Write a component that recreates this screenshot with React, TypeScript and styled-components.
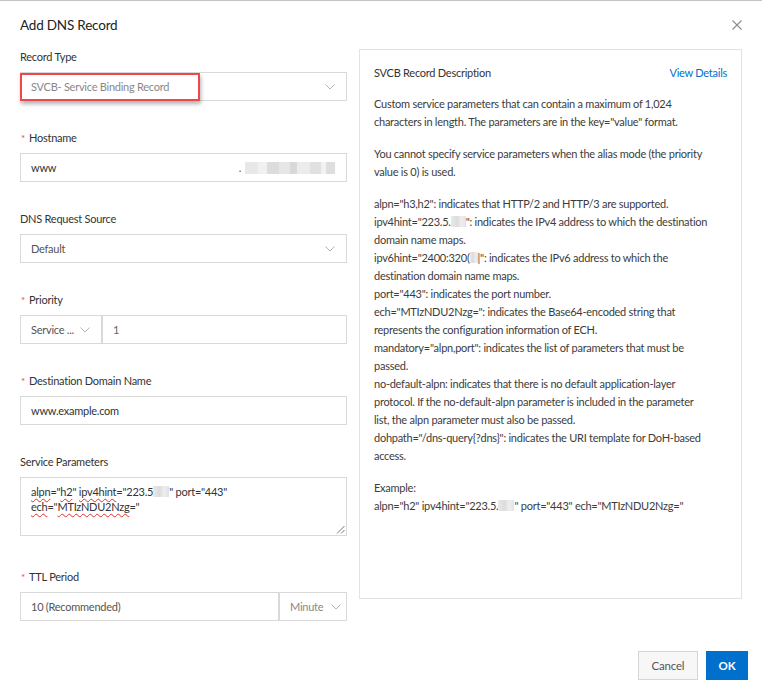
import React from "react";
import styled, { createGlobalStyle } from "styled-components";

const GlobalStyle = createGlobalStyle`
  html, body {
    margin: 0;
    padding: 0;
    background: #fff;
  }
  body {
    font-family: Lato, "Open Sans", sans-serif;
    font-size: 11px;
    letter-spacing: -0.25px;
    color: #333;
  }
`;

const Dialog = styled.div`
  width: 762px;
  height: 688px;
  box-sizing: border-box;
  border-top: 1px solid #c4c4c4;
  background: #fff;
  display: flex;
  flex-direction: column;
  overflow: hidden;
`;

const Header = styled.div`
  flex: none;
  height: 48px;
  padding: 0 19px 0 20px;
  display: flex;
  align-items: center;
  justify-content: space-between;
`;

const Title = styled.h1`
  margin: 0;
  font-size: 13.5px;
  letter-spacing: -0.2px;
  font-weight: 400;
  color: #222;
`;

const CloseButton = styled.button`
  width: 12px;
  height: 12px;
  padding: 0;
  border: none;
  background: none;
  display: flex;
  align-items: center;
  justify-content: center;
  cursor: pointer;
`;

const Body = styled.div`
  flex: none;
  display: flex;
  align-items: flex-start;
  gap: 12px;
  padding: 0 20px;
`;

const FormColumn = styled.div`
  width: 327px;
  display: flex;
  flex-direction: column;
`;

const FormItem = styled.div<{ $gap?: number }>`
  margin-bottom: ${(p) => p.$gap ?? 29}px;
  &:last-child {
    margin-bottom: 0;
  }
`;

const Label = styled.div`
  line-height: 16px;
  margin-bottom: 7px;
  color: #333;
`;

const Star = styled.span`
  color: #e84a45;
  font-size: 10px;
  margin: 0 4px 0 1px;
`;

const Field = styled.div<{ $width?: number; $color?: string; $pr?: number }>`
  position: relative;
  box-sizing: border-box;
  height: 29px;
  width: ${(p) => (p.$width ? `${p.$width}px` : "auto")};
  flex: ${(p) => (p.$width ? "none" : "1")};
  border: 1px solid #d9d9d9;
  background: #fff;
  padding: 0 ${(p) => p.$pr ?? 11}px 0 10px;
  display: flex;
  align-items: center;
  gap: 4px;
  color: ${(p) => p.$color ?? "#333"};
`;

const FieldText = styled.span`
  flex: 1;
  min-width: 0;
  white-space: nowrap;
`;

const Group = styled.div`
  display: flex;
`;

const Highlight = styled.div`
  position: absolute;
  left: -1px;
  top: 0;
  width: 180px;
  height: 28px;
  box-sizing: border-box;
  border: 2px solid #f0474a;
  box-shadow: 1px 3px 4px rgba(0, 0, 0, 0.3);
  pointer-events: none;
`;

const Blur = styled.span<{ $w: number }>`
  display: inline-block;
  width: ${(p) => p.$w}px;
  height: 11px;
  vertical-align: -1px;
  background: linear-gradient(90deg, #e9e9e9, #dcdcdc 40%, #eeeeee 70%, #e2e2e2);
`;

const HostBlur = styled.span`
  display: inline-block;
  width: 90px;
  height: 12px;
  background: linear-gradient(
    90deg,
    #e8e8e8 0 14%,
    #f0f0f0 14% 24%,
    #dcdcdc 24% 38%,
    #e6e6e6 38% 50%,
    #d9d9d9 50% 58%,
    #ececec 58% 72%,
    #e1e1e1 72% 84%,
    #f2f2f2 84% 90%,
    #dedede 90% 100%
  );
`;

const TextArea = styled.div`
  position: relative;
  box-sizing: border-box;
  height: 59px;
  border: 1px solid #d9d9d9;
  padding: 6px 10px;
  line-height: 15px;
  color: #333;
`;

const Squiggle = styled.span`
  text-decoration: underline wavy #e0302b;
  text-decoration-thickness: 1px;
  text-underline-offset: 2px;
`;

const ResizeGrip = styled.svg`
  position: absolute;
  right: 1px;
  bottom: 1px;
`;

const Panel = styled.section`
  width: 383px;
  height: 550px;
  box-sizing: border-box;
  border: 1px solid #e3e3e3;
  padding: 14px;
  color: #3c3c3c;
  line-height: 18px;
`;

const PanelHead = styled.div`
  display: flex;
  justify-content: space-between;
  margin-bottom: 13px;
`;

const PanelTitle = styled.span`
  color: #333;
`;

const Link = styled.a`
  color: #0070cc;
  text-decoration: none;
  cursor: pointer;
`;

const Para = styled.p`
  margin: 0 0 14px;
  white-space: nowrap;
`;

const Footer = styled.div`
  flex: none;
  margin-top: 30px;
  padding-right: 14px;
  display: flex;
  justify-content: flex-end;
  gap: 8px;
`;

const Button = styled.button<{ $primary?: boolean; $w: number }>`
  width: ${(p) => p.$w}px;
  height: 29px;
  padding: 0;
  font-family: inherit;
  font-size: 11.5px;
  letter-spacing: -0.2px;
  font-weight: ${(p) => (p.$primary ? 700 : 400)};
  border: 1px solid ${(p) => (p.$primary ? "#0070cc" : "#d6d6d6")};
  background: ${(p) => (p.$primary ? "#0070cc" : "#f7f7f7")};
  color: ${(p) => (p.$primary ? "#fff" : "#555")};
  cursor: pointer;
`;

function Chevron() {
  return (
    <svg width="10" height="6" viewBox="0 0 10 6" style={{ flex: "none" }}>
      <path d="M0.5 0.5 L5 5 L9.5 0.5" fill="none" stroke="#b3b3b3" strokeWidth="1" />
    </svg>
  );
}

function Select({ text, color, width, pr }: { text: string; color?: string; width?: number; pr?: number }) {
  return (
    <Field $width={width} $color={color} $pr={pr}>
      <FieldText>{text}</FieldText>
      <Chevron />
    </Field>
  );
}

export default function App() {
  return (
    <>
      <GlobalStyle />
      <Dialog>
        <Header>
          <Title>Add DNS Record</Title>
          <CloseButton aria-label="Close">
            <svg width="10" height="10" viewBox="0 0 10 10">
              <path d="M0.5 0.5 L9.5 9.5 M9.5 0.5 L0.5 9.5" stroke="#8c8c8c" strokeWidth="1.1" />
            </svg>
          </CloseButton>
        </Header>

        <Body>
          <FormColumn>
            <FormItem>
              <Label>Record Type</Label>
              <Field $color="#888">
                <FieldText>SVCB- Service Binding Record</FieldText>
                <Chevron />
                <Highlight />
              </Field>
            </FormItem>

            <FormItem>
              <Label>
                <Star>*</Star>Hostname
              </Label>
              <Field>
                <FieldText>www</FieldText>
                <span style={{ color: "#555" }}>.</span>
                <HostBlur />
              </Field>
            </FormItem>

            <FormItem>
              <Label>DNS Request Source</Label>
              <Select text="Default" color="#555" />
            </FormItem>

            <FormItem>
              <Label>
                <Star>*</Star>Priority
              </Label>
              <Group>
                <Select text="Service ..." color="#555" width={82} />
                <Field $color="#666">
                  <FieldText>1</FieldText>
                </Field>
              </Group>
            </FormItem>

            <FormItem>
              <Label>
                <Star>*</Star>Destination Domain Name
              </Label>
              <Field>
                <FieldText>www.example.com</FieldText>
              </Field>
            </FormItem>

            <FormItem $gap={33}>
              <Label>Service Parameters</Label>
              <TextArea>
                <Squiggle>alpn</Squiggle>="<Squiggle>h2</Squiggle>" <Squiggle>ipv4hint</Squiggle>="223.5
                <Blur $w={16} />" port="443"
                <br />
                <Squiggle>ech</Squiggle>="<Squiggle>MTIzNDU2Nzg</Squiggle>="
                <ResizeGrip width="9" height="9" viewBox="0 0 9 9">
                  <path d="M8.5 1 L1 8.5 M8.5 5 L5 8.5" stroke="#777" strokeWidth="1" />
                </ResizeGrip>
              </TextArea>
            </FormItem>

            <FormItem>
              <Label>
                <Star>*</Star>TTL Period
              </Label>
              <Group>
                <Field $width={259} $color="#555">
                  <FieldText>10 (Recommended)</FieldText>
                </Field>
                <Select text="Minute" color="#888" width={68} pr={5} />
              </Group>
            </FormItem>
          </FormColumn>

          <Panel>
            <PanelHead>
              <PanelTitle>SVCB Record Description</PanelTitle>
              <Link>View Details</Link>
            </PanelHead>
            <Para>
              Custom service parameters that can contain a maximum of 1,024
              <br />
              characters in length. The parameters are in the key="value" format.
            </Para>
            <Para>
              You cannot specify service parameters when the alias mode (the priority
              <br />
              value is 0) is used.
            </Para>
            <Para>
              alpn="h3,h2": indicates that HTTP/2 and HTTP/3 are supported.
              <br />
              ipv4hint="223.5.<Blur $w={15} />": indicates the IPv4 address to which the destination
              <br />
              domain name maps.
              <br />
              ipv6hint="2400:320(<Blur $w={8} />|": indicates the IPv6 address to which the
              <br />
              destination domain name maps.
              <br />
              port="443": indicates the port number.
              <br />
              ech="MTIzNDU2Nzg=": indicates the Base64-encoded string that
              <br />
              represents the configuration information of ECH.
              <br />
              mandatory="alpn,port": indicates the list of parameters that must be
              <br />
              passed.
              <br />
              no-default-alpn: indicates that there is no default application-layer
              <br />
              protocol. If the no-default-alpn parameter is included in the parameter
              <br />
              list, the alpn parameter must also be passed.
              <br />
              dohpath="/dns-query{"{?dns}"}": indicates the URI template for DoH-based
              <br />
              access.
            </Para>
            <Para>
              Example:
              <br />
              alpn="h2" ipv4hint="223.5.<Blur $w={16} />" port="443" ech="MTIzNDU2Nzg="
            </Para>
          </Panel>
        </Body>

        <Footer>
          <Button $w={60}>Cancel</Button>
          <Button $primary $w={42}>
            OK
          </Button>
        </Footer>
      </Dialog>
    </>
  );
}
